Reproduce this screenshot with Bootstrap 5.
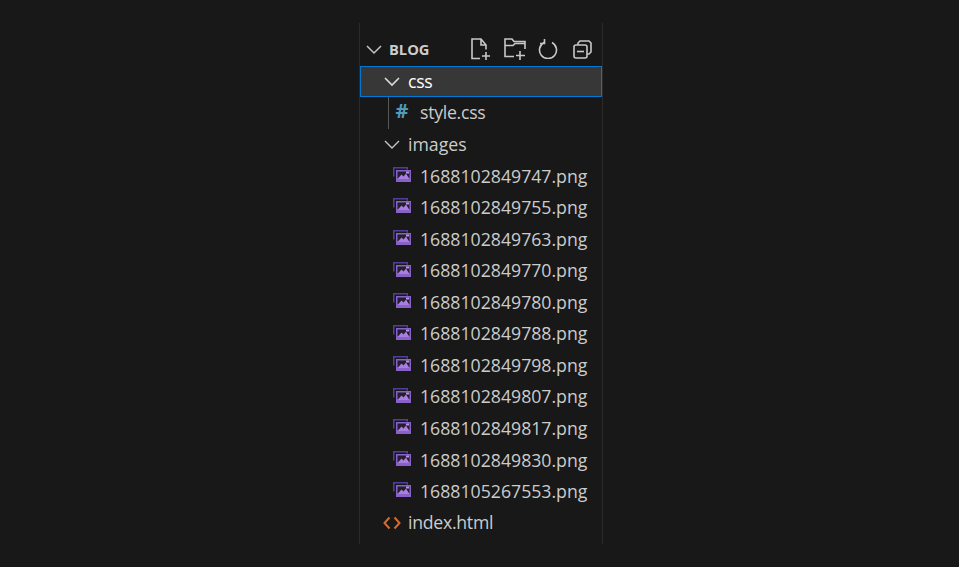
<!DOCTYPE html>
<html lang="en"><head><meta charset="utf-8"><title>Explorer</title>
<link href="https://cdn.jsdelivr.net/npm/bootstrap@5.3.0/dist/css/bootstrap.min.css" rel="stylesheet">
<style>
html,body{height:100%;background:#181818;overflow:hidden}
.stage{height:567px;padding-top:23px;padding-left:3px}
.pane{width:244px;height:521px;border-left:1px solid #2b2b2b;border-right:1px solid #2b2b2b;font-family:"Open Sans","Noto Sans",sans-serif;font-size:17.7px;color:#cccccc}
.headrow{height:42.5px;padding:10px 10px 0 5px}
.headrow b{font-size:14.7px;font-weight:700;margin-left:6px;color:#cccccc}
.tree{margin:0;padding:0;list-style:none}
.trow{height:31.55px;line-height:31.55px;white-space:nowrap}
.trow.sel{background:#373737;outline:1px solid #0078d4;outline-offset:-1px}
.lv1{padding-left:23px}
.lv2{padding-left:33px}
.guide{position:relative}
.guide::before{content:"";position:absolute;left:28px;top:0;bottom:0;width:1px;background:#585858}
.gap1{margin-left:7px}
.gap2{margin-left:9px}
.numname{padding-top:1px}
.tight{letter-spacing:-.28px}
.hash{width:18px;text-align:center;color:#519aba;font-weight:700;font-size:20px;line-height:1;margin-top:-3px}
.hicons{margin-left:auto}
.ic2{margin-left:13px}
.ic3{margin-left:12px}
.ic4{margin-left:15px}
.pic{margin-top:-3px;flex:none}
</style></head><body>
<svg width="0" height="0" class="position-absolute"><symbol id="imgicon" viewBox="0 0 18 15"><path fill="none" stroke="#4f3f9c" stroke-width="1.5" d="M.75 9.500V.75h13.500v2"/><path fill="#8a61c8" d="M3 3h15v12H3z"/><path fill="#241f2c" d="M4.500 4.500h12v7h-12z"/><path fill="#a77fe0" d="M4.500 12l4-4.500 2 2 2.500-3 3.500 5.500z"/><path fill="#b794e8" d="M13 4.500h3v2h-3z"/></symbol></svg>
<div class="stage d-flex justify-content-center">
<div class="pane">
<div class="headrow d-flex align-items-center">
<svg width="18" height="18" viewBox="0 0 18 18" fill="none" stroke="#c5c5c5" stroke-width="1.5"><path d="M2 6l7 7 7-7"/></svg>
<b>BLOG</b>
<div class="hicons d-flex align-items-center">
<svg width="20" height="22" viewBox="0 0 20 22" fill="none" stroke="#c8c8c8" stroke-width="1.6"><path d="M9 20.500H1V1h9l5 6v4.500M10 1v6h5M15 14v8M11 18h8"/></svg>
<svg class="ic2" width="22" height="22" viewBox="0 0 22 22" fill="none" stroke="#c8c8c8" stroke-width="1.6"><path d="M10 18.500H1V1h7l2 2.500h11V11M1 7.500h8l2-2h10M16 13v9M12 17.500h9"/></svg>
<svg class="ic3" width="20" height="20" viewBox="0 0 20 20" fill="none" stroke="#c8c8c8" stroke-width="1.6"><path d="M6 3.500A8.500 8.500 0 1 0 14 3.500M6.500 0v4.500H2"/></svg>
<svg class="ic4" width="19" height="19" viewBox="0 0 19 19" fill="none" stroke="#c8c8c8" stroke-width="1.6"><path d="M5 5V3l2-2h9l2 2v9l-2 2h-2"/><rect x="1" y="5" width="13" height="13" rx="2"/><path d="M4 11.500h7"/></svg>
</div>
</div>
<ul class="tree">
<li class="trow sel lv1 d-flex align-items-center"><svg width="18" height="18" viewBox="0 0 18 18" fill="none" stroke="#d8d8d8" stroke-width="1.7"><path d="M2 6l7 7 7-7"/></svg><span class="gap1 text-white tight">css</span></li>
<li class="trow guide lv2 d-flex align-items-center"><span class="hash">#</span><span class="gap2 tight">style.css</span></li>
<li class="trow lv1 d-flex align-items-center"><svg width="18" height="18" viewBox="0 0 18 18" fill="none" stroke="#c5c5c5" stroke-width="1.4"><path d="M2 6l7 7 7-7"/></svg><span class="gap1">images</span></li>
<li class="trow lv2 d-flex align-items-center"><svg class="pic" width="18" height="15"><use href="#imgicon"/></svg><span class="gap2 numname">1688102849747.png</span></li>
<li class="trow lv2 d-flex align-items-center"><svg class="pic" width="18" height="15"><use href="#imgicon"/></svg><span class="gap2 numname">1688102849755.png</span></li>
<li class="trow lv2 d-flex align-items-center"><svg class="pic" width="18" height="15"><use href="#imgicon"/></svg><span class="gap2 numname">1688102849763.png</span></li>
<li class="trow lv2 d-flex align-items-center"><svg class="pic" width="18" height="15"><use href="#imgicon"/></svg><span class="gap2 numname">1688102849770.png</span></li>
<li class="trow lv2 d-flex align-items-center"><svg class="pic" width="18" height="15"><use href="#imgicon"/></svg><span class="gap2 numname">1688102849780.png</span></li>
<li class="trow lv2 d-flex align-items-center"><svg class="pic" width="18" height="15"><use href="#imgicon"/></svg><span class="gap2 numname">1688102849788.png</span></li>
<li class="trow lv2 d-flex align-items-center"><svg class="pic" width="18" height="15"><use href="#imgicon"/></svg><span class="gap2 numname">1688102849798.png</span></li>
<li class="trow lv2 d-flex align-items-center"><svg class="pic" width="18" height="15"><use href="#imgicon"/></svg><span class="gap2 numname">1688102849807.png</span></li>
<li class="trow lv2 d-flex align-items-center"><svg class="pic" width="18" height="15"><use href="#imgicon"/></svg><span class="gap2 numname">1688102849817.png</span></li>
<li class="trow lv2 d-flex align-items-center"><svg class="pic" width="18" height="15"><use href="#imgicon"/></svg><span class="gap2 numname">1688102849830.png</span></li>
<li class="trow lv2 d-flex align-items-center"><svg class="pic" width="18" height="15"><use href="#imgicon"/></svg><span class="gap2 numname">1688105267553.png</span></li>
<li class="trow lv1 d-flex align-items-center"><svg width="18" height="18" viewBox="0 0 18 18" fill="none" stroke="#d9692f" stroke-width="2"><path d="M6.500 3.500L1.500 9l5 5.500M11.500 3.500l5 5.500-5 5.500"/></svg><span class="gap1 tight">index.html</span></li>
</ul>
</div>
</div>
</body></html>
